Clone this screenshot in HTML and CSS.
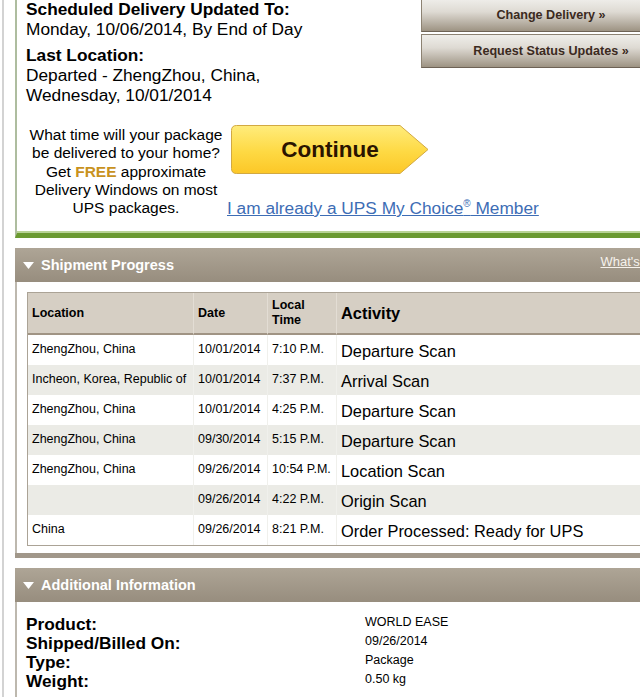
FILE: index.html
```html
<!DOCTYPE html>
<html lang="en">
  <head>
    <meta charset="UTF-8" />
    <meta name="viewport" content="width=device-width, initial-scale=1.0" />
    <title>UPS Tracking Detail</title>
    <link rel="stylesheet" href="styles.css">
  </head>
  <body>
    <div class="page">
      <!-- Resumen del envío -->
      <div class="summary">
        <div class="summary-main">
          <div class="status">
            <h2 class="status-label">Scheduled Delivery Updated To:</h2>
            <p class="status-value">Monday, 10/06/2014, By End of Day</p>
          </div>
          <div class="status">
            <h2 class="status-label">Last Location:</h2>
            <p class="status-value">Departed - ZhengZhou, China,<br>Wednesday, 10/01/2014</p>
          </div>

          <div class="mychoice">
            <p class="mychoice-text">
              What time will your package<br>be delivered to your home?<br>
              Get <span class="mychoice-free">FREE</span> approximate<br>
              Delivery Windows on most<br>UPS packages.
            </p>
            <div class="mychoice-actions">
              <a class="continue-btn" href="#">
                <svg width="198" height="49" viewBox="0 0 198 49">
                  <defs>
                    <linearGradient id="continueFill" x1="0" y1="0" x2="0" y2="1">
                      <stop offset="0" stop-color="#ffec7c" />
                      <stop offset="0.55" stop-color="#fed943" />
                      <stop offset="1" stop-color="#fcc727" />
                    </linearGradient>
                  </defs>
                  <path d="M5.5 0.5H169L197 24.5L169 48.5H5.5Q0.5 48.5 0.5 43.5V5.5Q0.5 0.5 5.5 0.5Z"
                        fill="url(#continueFill)" stroke="#d2a942" />
                </svg>
                <span>Continue</span>
              </a>
              <a class="member-link" href="#">I am already a UPS My Choice<sup>®</sup> Member</a>
            </div>
          </div>
        </div>

        <div class="summary-actions">
          <a class="action-btn" href="#">Change Delivery »</a>
          <a class="action-btn" href="#">Request Status Updates »</a>
        </div>
      </div>

      <!-- Progreso del envío -->
      <section class="panel">
        <div class="panel-header">
          <svg class="panel-arrow" width="11" height="7" viewBox="0 0 11 7"><path d="M0 0H11L5.5 7Z" fill="#fff" /></svg>
          <span class="panel-title">Shipment Progress</span>
          <a class="panel-help" href="#">What's This?</a>
        </div>
        <div class="panel-body">
          <table class="progress-table">
            <colgroup>
              <col class="col-location">
              <col class="col-date">
              <col class="col-time">
              <col>
            </colgroup>
            <thead>
              <tr>
                <th>Location</th>
                <th>Date</th>
                <th>Local<br>Time</th>
                <th class="activity">Activity</th>
              </tr>
            </thead>
            <tbody>
              <tr>
                <td>ZhengZhou, China</td>
                <td>10/01/2014</td>
                <td>7:10 P.M.</td>
                <td class="activity">Departure Scan</td>
              </tr>
              <tr>
                <td>Incheon, Korea, Republic of</td>
                <td>10/01/2014</td>
                <td>7:37 P.M.</td>
                <td class="activity">Arrival Scan</td>
              </tr>
              <tr>
                <td>ZhengZhou, China</td>
                <td>10/01/2014</td>
                <td>4:25 P.M.</td>
                <td class="activity">Departure Scan</td>
              </tr>
              <tr>
                <td>ZhengZhou, China</td>
                <td>09/30/2014</td>
                <td>5:15 P.M.</td>
                <td class="activity">Departure Scan</td>
              </tr>
              <tr>
                <td>ZhengZhou, China</td>
                <td>09/26/2014</td>
                <td>10:54 P.M.</td>
                <td class="activity">Location Scan</td>
              </tr>
              <tr>
                <td></td>
                <td>09/26/2014</td>
                <td>4:22 P.M.</td>
                <td class="activity">Origin Scan</td>
              </tr>
              <tr>
                <td>China</td>
                <td>09/26/2014</td>
                <td>8:21 P.M.</td>
                <td class="activity">Order Processed: Ready for UPS</td>
              </tr>
            </tbody>
          </table>
        </div>
      </section>

      <!-- Información adicional -->
      <section class="panel">
        <div class="panel-header">
          <svg class="panel-arrow" width="11" height="7" viewBox="0 0 11 7"><path d="M0 0H11L5.5 7Z" fill="#fff" /></svg>
          <span class="panel-title">Additional Information</span>
        </div>
        <div class="panel-body">
          <dl class="info-list">
            <dt>Product:</dt>
            <dd>WORLD EASE</dd>
            <dt>Shipped/Billed On:</dt>
            <dd>09/26/2014</dd>
            <dt>Type:</dt>
            <dd>Package</dd>
            <dt>Weight:</dt>
            <dd>0.50 kg</dd>
          </dl>
        </div>
      </section>
    </div>
  </body>
</html>
```

FILE: styles.css
```css
/* Estilos generales */
* {
  box-sizing: border-box;
}

html,
body {
  overflow: hidden;
}

body {
  margin: 0;
  background: #fff;
  color: #000;
  font-family: "Liberation Sans", Arial, Helvetica, sans-serif;
}

.page {
  width: 693px;
  min-height: 697px;
  margin-left: 2px;
  padding-left: 11px;
  border-left: 2px solid #d3d3d3;
}

/* Resumen */
.summary {
  display: flex;
  padding: 0 0 15px 9px;
  border-left: 2px solid #aebd9f;
  border-bottom: 5px solid #6b9a31;
  box-shadow: inset 0 -2px 0 #b9d396;
}

.summary-main {
  width: 395px;
  flex: none;
}

.status:first-child {
  margin-top: -1px;
}

.status + .status {
  margin-top: 6px;
}

.status-label,
.status-value {
  margin: 0;
  font-size: 17.3px;
  line-height: 20px;
}

.status-label {
  font-weight: bold;
}

/* Bloque My Choice */
.mychoice {
  display: flex;
  align-items: flex-start;
  margin-top: 20px;
}

.mychoice-text {
  flex: none;
  width: 200px;
  margin: 1px 0 0;
  font-size: 15.5px;
  line-height: 18.33px;
  text-align: center;
  white-space: nowrap;
}

.mychoice-free {
  color: #c8921e;
  font-weight: bold;
}

.mychoice-actions {
  display: flex;
  flex: none;
  flex-direction: column;
  align-items: flex-start;
  margin-left: 1px;
}

.continue-btn {
  position: relative;
  display: block;
  width: 198px;
  height: 49px;
  margin-left: 4px;
  text-decoration: none;
}

.continue-btn svg {
  position: absolute;
  top: 0;
  left: 0;
}

.continue-btn span {
  position: relative;
  display: block;
  color: #2b1400;
  font-size: 22.5px;
  font-weight: bold;
  line-height: 49px;
  text-align: center;
}

.member-link {
  margin-top: 24px;
  color: #3d6db5;
  font-size: 17.3px;
  line-height: 20px;
  white-space: nowrap;
}

.member-link sup {
  font-size: 10px;
  line-height: 0;
}

/* Botones de la derecha */
.summary-actions {
  display: flex;
  flex: none;
  flex-direction: column;
  gap: 2px;
  width: 260px;
  margin-top: -2px;
}

.action-btn {
  display: block;
  height: 34px;
  border: 1px solid #8c8272;
  border-bottom-color: #6d6255;
  background: linear-gradient(#efeeea 0%, #dedad3 40%, #9d9383 100%);
  color: #3b2a1e;
  font-size: 12.6px;
  font-weight: bold;
  line-height: 32px;
  text-align: center;
  text-decoration: none;
}

/* Paneles */
.panel {
  margin-top: 10px;
  border-bottom: 5px solid #a1978a;
}

.panel-header {
  display: flex;
  align-items: center;
  height: 34px;
  padding: 0 20px 0 8px;
  background: linear-gradient(#aea596, #978d7e);
  color: #fff;
}

.panel-arrow {
  margin-right: 7px;
}

.panel-title {
  font-size: 14.5px;
  font-weight: bold;
}

.panel-help {
  align-self: flex-start;
  margin-left: auto;
  padding-top: 6px;
  color: #f6f2ec;
  font-size: 13px;
  line-height: 15px;
}

.panel-body {
  padding: 10px 0 7px 10px;
  border-left: 2px solid #bdb8ae;
}

/* Tabla de progreso */
.progress-table {
  width: 660px;
  border: 1px solid #aba396;
  border-spacing: 0;
  table-layout: fixed;
}

.col-location {
  width: 165px;
}

.col-date {
  width: 74px;
}

.col-time {
  width: 69px;
}

.progress-table th {
  padding: 0 4px;
  border-bottom: 2px solid #a09484;
  background: #d6cfc4;
  font-size: 12.5px;
  line-height: 15px;
  text-align: left;
  vertical-align: middle;
}

.progress-table th + th {
  border-left: 1px solid #e3ddd4;
}

.progress-table thead tr {
  height: 42px;
}

.progress-table tbody tr {
  height: 30px;
}

.progress-table tbody tr:nth-child(even) {
  background: #ebebe6;
}

.progress-table td {
  padding: 7px 4px 0;
  font-size: 12.5px;
  vertical-align: top;
  white-space: nowrap;
}

.progress-table td + td {
  border-left: 1px solid #f0f0ec;
}

.progress-table .activity {
  font-size: 16.4px;
}

/* Información adicional */
.info-list {
  display: grid;
  grid-template-columns: 339px auto;
  margin: 0 0 0 -1px;
  padding: 3px 0 0;
}

.info-list dt {
  font-size: 17.3px;
  font-weight: bold;
  line-height: 19px;
}

.info-list dd {
  margin: 0;
  font-size: 12.5px;
  line-height: 15px;
}
```
